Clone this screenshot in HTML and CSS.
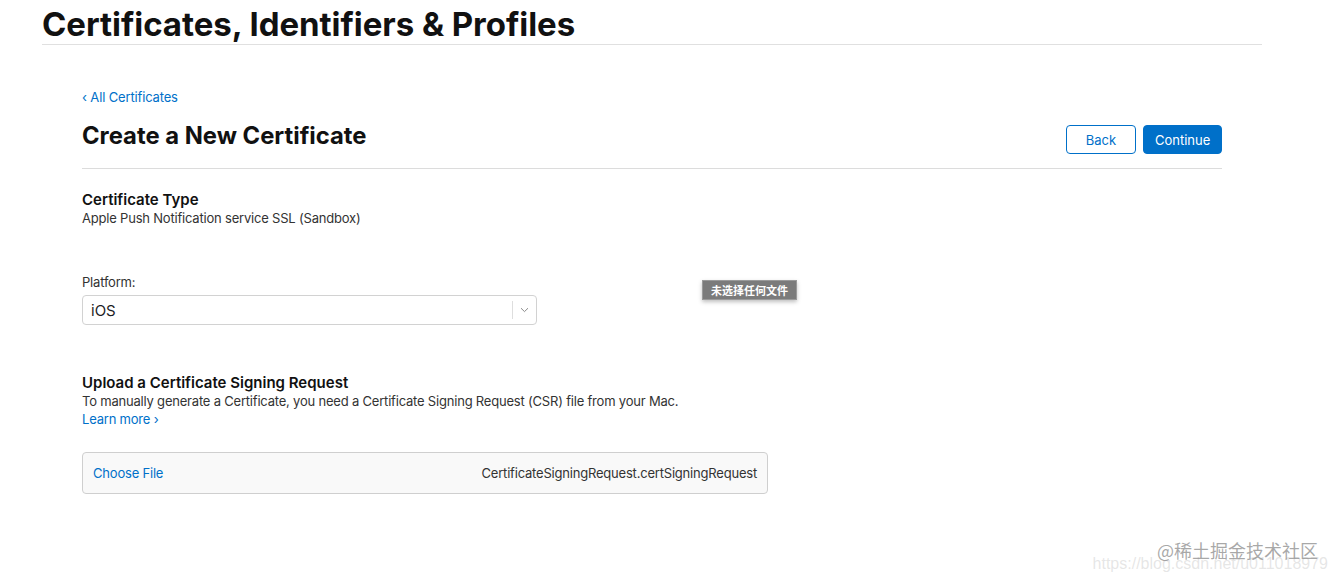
FILE: index.html
```html
<!DOCTYPE html>
<html>
<head>
<meta charset="utf-8">
<link rel="stylesheet" href="styles.css">
</head>
<body>
<div class="page">
  <header class="topbar">
    <h1 class="site-title">Certificates, Identifiers &amp; Profiles</h1>
  </header>
  <main class="content">
    <a class="back-link" href="#">‹ All Certificates</a>
    <div class="heading-row">
      <h2 class="page-title">Create a New Certificate</h2>
      <div class="actions">
        <button class="btn btn-outline">Back</button>
        <button class="btn btn-primary">Continue</button>
      </div>
    </div>
    <section class="section cert-type">
      <h3 class="section-title">Certificate Type</h3>
      <p class="section-text">Apple Push Notification service SSL (Sandbox)</p>
    </section>
    <section class="section platform">
      <div class="platform-row">
        <div class="field">
          <label class="field-label">Platform:</label>
          <div class="select">
            <span class="select-value">iOS</span>
            <span class="select-arrow">
              <svg width="9" height="6" viewBox="0 0 9 6"><path d="M1 1.2 L4.5 4.6 L8 1.2" fill="none" stroke="#8a8a8a" stroke-width="1"/></svg>
            </span>
          </div>
        </div>
        <div class="tooltip-wrap"><span class="tooltip">未选择任何文件</span></div>
      </div>
    </section>
    <section class="section upload">
      <h3 class="section-title">Upload a Certificate Signing Request</h3>
      <p class="section-text">To manually generate a Certificate, you need a Certificate Signing Request (CSR) file from your Mac.</p>
      <a class="learn-more" href="#">Learn more ›</a>
      <div class="file-box">
        <span class="choose">Choose File</span>
        <span class="file-name">CertificateSigningRequest.certSigningRequest</span>
      </div>
    </section>
  </main>
  <div class="watermark">
    <span class="wm-url">https://blog.csdn.net/u011018979</span>
    <span class="wm-brand">@稀土掘金技术社区</span>
  </div>
</div>
</body>
</html>
```

FILE: styles.css
```css
* { box-sizing: border-box; }
html, body { margin: 0; padding: 0; background: #fff; }
body {
  font-family: Inter, "Noto Sans", "Noto Sans CJK SC", sans-serif;
  color: #1d1d1f;
  width: 1338px;
  height: 580px;
  overflow: hidden;
}
.page { position: relative; height: 580px; }
.topbar {
  margin: 0 76px 0 42px;
  border-bottom: 1px solid #e0e0e0;
  height: 45px;
}
.site-title {
  margin: 0;
  padding-top: 4px;
  font-size: 33px;
  font-weight: 700;
  letter-spacing: -0.05px;
  line-height: 40px;
  color: #111;
}
.content {
  margin: 0 116px 0 82px;
  padding-top: 43px;
}
.back-link {
  display: block;
  font-size: 13px;
  letter-spacing: -0.15px;
  line-height: 18px;
  color: #0070c9;
  text-decoration: none;
}
.heading-row {
  display: flex;
  justify-content: space-between;
  align-items: flex-end;
  border-bottom: 1px solid #dcdcdc;
  padding-bottom: 14px;
  margin-top: 16px;
}
.page-title {
  margin: 0 0 4px 0;
  font-size: 23.8px;
  line-height: 28px;
  font-weight: 700;
  color: #111;
}
.actions { display: flex; gap: 7px; }
.btn {
  font-family: Inter, "Noto Sans", sans-serif;
  font-size: 13px;
  height: 29px;
  border-radius: 4px;
  padding: 0 11px;
  cursor: pointer;
}
.btn-outline {
  width: 70px;
  background: #fff;
  color: #0070c9;
  border: 1px solid #0070c9;
}
.btn-primary {
  width: 79px;
  background: #0070c9;
  color: #fff;
  border: 1px solid #0070c9;
}
.section-title {
  margin: 0;
  font-size: 15px;
  line-height: 19px;
  font-weight: 600;
  color: #111;
}
.section-text {
  margin: 0;
  font-size: 13px;
  letter-spacing: -0.2px;
  line-height: 18px;
  color: #333;
}
.cert-type { padding-top: 21px; }
.platform { padding-top: 46px; }
.platform-row { display: flex; align-items: flex-start; }
.field { width: 455px; }
.field-label {
  display: block;
  font-size: 13px;
  letter-spacing: -0.2px;
  line-height: 18px;
  color: #333;
  margin-bottom: 4px;
}
.select {
  display: flex;
  align-items: center;
  height: 30px;
  border: 1px solid #d2d2d2;
  border-radius: 4px;
  background: #fff;
}
.select-value {
  flex: 1;
  padding-left: 8px;
  font-size: 15px;
  color: #1d1d1f;
}
.select-arrow {
  width: 24px;
  height: 18px;
  border-left: 1px solid #dedede;
  display: flex;
  align-items: center;
  justify-content: center;
}
.tooltip-wrap { padding: 6px 0 0 165px; }
.tooltip {
  display: inline-block;
  background: #7b7b7b;
  color: #fff;
  font-family: "Noto Sans CJK SC", sans-serif;
  font-size: 11px;
  font-weight: 700;
  line-height: 18px;
  padding: 0 8px;
  border: 1px solid #9a9a9a;
  box-shadow: 0 2px 4px rgba(0,0,0,0.25);
}
.upload { padding-top: 48px; }
.learn-more {
  display: block;
  font-size: 13px;
  letter-spacing: -0.2px;
  line-height: 18px;
  color: #0070c9;
  text-decoration: none;
}
.file-box {
  margin-top: 24px;
  width: 686px;
  height: 42px;
  display: flex;
  align-items: center;
  justify-content: space-between;
  padding: 0 10px;
  background: #f9f9f9;
  border: 1px solid #cfcfcf;
  border-radius: 4px;
  font-size: 13px;
  letter-spacing: -0.2px;
}
.choose { color: #0070c9; }
.file-name { color: #333; }
.watermark {
  position: absolute;
  right: 10px;
  bottom: 12px;
  width: 260px;
  height: 40px;
}
.wm-url {
  position: absolute;
  right: 0;
  bottom: -5px;
  font-family: "Liberation Sans", sans-serif;
  font-size: 16px;
  color: rgba(200,200,200,0.45);
  white-space: nowrap;
}
.wm-brand {
  position: absolute;
  right: 10px;
  bottom: 5px;
  font-family: "Noto Sans CJK SC", sans-serif;
  font-size: 18px;
  color: rgba(140,140,140,0.75);
  white-space: nowrap;
}
```
